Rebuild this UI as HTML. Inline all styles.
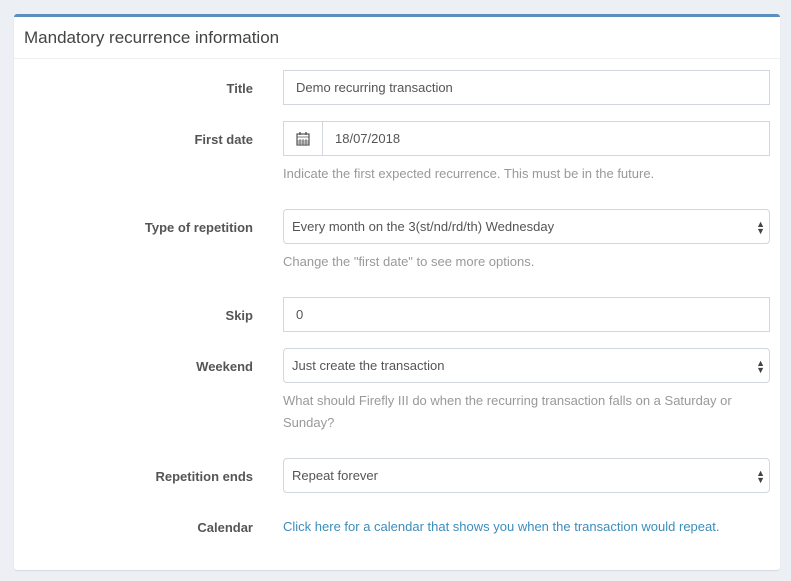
<!DOCTYPE html>
<html><head><style>
body{margin:0;background:#ecf0f5;font-family:"Liberation Sans",sans-serif;width:791px;height:581px;overflow:hidden;position:relative}
.box{position:absolute;left:14px;top:14px;width:766px;height:553px;background:#fff;border-top:3px solid #5b8dbf;border-radius:3px;box-shadow:0 1px 1px rgba(0,0,0,.1)}
.hd{position:absolute;left:0;top:0;right:0;height:42px;border-bottom:1px solid #f0f0f0;font-size:17px;color:#444;padding:11px 0 0 10px;box-sizing:border-box}
.l{position:absolute;right:527px;font-size:13px;font-weight:bold;color:#555;width:200px;text-align:right}
.in{position:absolute;left:269px;width:487px;height:35px;border:1px solid #d2d6de;box-sizing:border-box;font-size:13px;color:#555;padding:9px 0 0 12px}
.sel{border-radius:4px;padding-left:8px}
.arr{position:absolute;right:4px;top:11px;font-size:9px;line-height:7px;color:#444}
.h{position:absolute;left:269px;font-size:13px;color:#999;line-height:22px;width:500px}
</style></head><body>
<div class="box">
<div class="hd">Mandatory recurrence information</div>
<div class="l" style="top:64px">Title</div>
<div class="in" style="top:53px">Demo recurring transaction</div>
<div class="l" style="top:115px">First date</div>
<div class="in" style="top:104px;padding-left:51px">18/07/2018
<div style="position:absolute;left:0;top:0;width:38px;height:33px;border-right:1px solid #d2d6de"><svg width="14" height="14" viewBox="0 0 14 14" style="position:absolute;left:12px;top:10px"><rect x="1" y="2" width="12" height="11" fill="none" stroke="#555" stroke-width="1.2"/><path d="M1 5h12M4 7v6M7 7v6M10 7v6M1 9h12M1 11h12" stroke="#555" stroke-width=".8"/><path d="M4 0v3M10 0v3" stroke="#555" stroke-width="1.4"/></svg></div></div>
<div class="h" style="top:146px">Indicate the first expected recurrence. This must be in the future.</div>
<div class="l" style="top:203px">Type of repetition</div>
<div class="in sel" style="top:192px">Every month on the 3(st/nd/rd/th) Wednesday<div class="arr">▲<br>▼</div></div>
<div class="h" style="top:234px">Change the "first date" to see more options.</div>
<div class="l" style="top:291px">Skip</div>
<div class="in" style="top:280px">0</div>
<div class="l" style="top:342px">Weekend</div>
<div class="in sel" style="top:331px">Just create the transaction<div class="arr">▲<br>▼</div></div>
<div class="h" style="top:373px">What should Firefly III do when the recurring transaction falls on a Saturday or<br>Sunday?</div>
<div class="l" style="top:452px">Repetition ends</div>
<div class="in sel" style="top:441px">Repeat forever<div class="arr">▲<br>▼</div></div>
<div class="l" style="top:503px">Calendar</div>
<div class="h" style="top:499px;color:#3c8dbc">Click here for a calendar that shows you when the transaction would repeat.</div>
</div>
</body></html>
